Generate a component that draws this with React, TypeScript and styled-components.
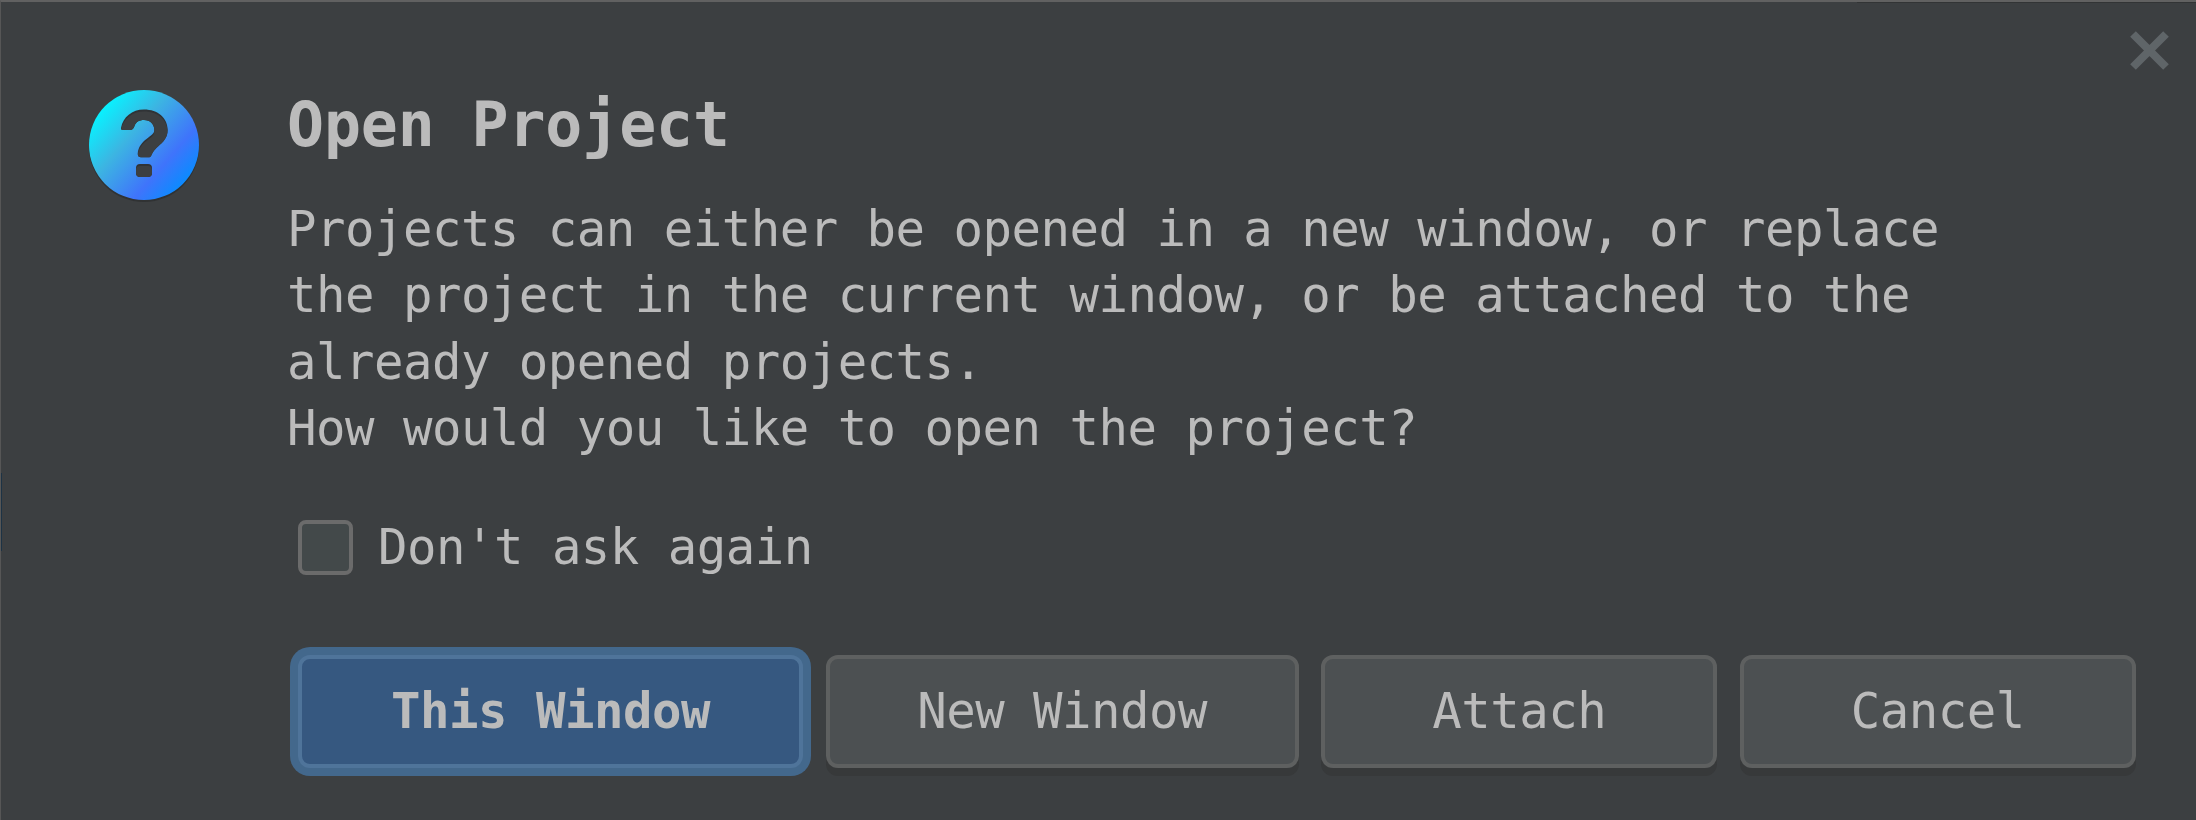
import React from "react";
import styled, { createGlobalStyle, css } from "styled-components";

const GlobalStyle = createGlobalStyle`
  * { box-sizing: border-box; }
  body { margin: 0; background: #3c3f41; }
`;

const Dialog = styled.main`
  position: relative;
  display: grid;
  grid-template-columns: 198px 1fr;
  column-gap: 88px;
  width: 2196px;
  height: 820px;
  overflow: hidden;
  background: #3c3f41;
  border-top: 2px solid #616161;
  border-left: 1px solid #565656;
  color: #bbbbbb;
  font-family: "DejaVu Sans Mono", monospace;
  font-size: 49px;
  letter-spacing: -0.52px;
`;

const TopEdge = styled.div`
  position: absolute;
  top: 0;
  right: 0;
  width: 339px;
  height: 1px;
  background: #323435;
`;

const FocusStripe = styled.div`
  position: absolute;
  left: 0;
  top: 471px;
  width: 1px;
  height: 78px;
  background: #1d3345;
`;

const IconColumn = styled.div`
  display: flex;
  justify-content: flex-end;
  padding-top: 88px;
`;

const Content = styled.div`
  display: flex;
  flex-direction: column;
  align-items: flex-start;
`;

const Title = styled.h1`
  margin: 85px 0 0;
  font-size: 61.5px;
  line-height: 76px;
  font-weight: 700;
  letter-spacing: -0.12px;
  white-space: pre;
`;

const Message = styled.p`
  margin: 34px 0 0;
  line-height: 66.4px;
  white-space: pre;
`;

const CheckRow = styled.label`
  display: flex;
  align-items: center;
  gap: 25px;
  height: 56px;
  margin: 56.4px 0 0 11px;
  white-space: pre;
`;

const Box = styled.span`
  width: 55px;
  height: 55px;
  border: 4px solid #6b6b6b;
  border-radius: 8px;
  background: #43494a;
`;

const Actions = styled.div`
  display: flex;
  gap: 22.6px;
  margin: 80px 0 0 11px;
`;

const Button = styled.button<{ $width: number; $primary?: boolean }>`
  width: ${(p) => p.$width}px;
  height: 113px;
  padding: 0;
  border: 4px solid #5e6060;
  border-radius: 12px;
  background: #4c5052;
  box-shadow: 0 8px 0 #37393a;
  color: #bbbbbb;
  font: inherit;
  letter-spacing: inherit;
  white-space: pre;
  ${(p) =>
    p.$primary &&
    css`
      border-color: #4f749a;
      background: #365880;
      box-shadow: 0 0 0 8px #43688c;
      font-weight: 700;
    `}
`;

const CloseButton = styled.button`
  position: absolute;
  top: 28px;
  right: 26px;
  display: flex;
  padding: 0;
  border: 0;
  background: none;
`;

const MARK =
  "M32 38C34 27 43 19.5 55 19.5C69 19.5 78.7 28 78.7 40C78.7 48 74 52 69 56.5C65 60 64 62 62.5 65C62 66.5 61 67.3 59.5 67.3H52C50 67.3 48.7 66 48.7 64C49 57 53 52.5 57.5 49C62 45.5 65.3 43.5 65.3 40C65.3 34 61 30 55 30C50 30 47 32 45.5 36C44.5 38.5 43.5 40 41 40H34.5C32.5 40 31.8 39.5 32 38Z M51 74H59Q63 74 63 78V83Q63 87 59 87H51Q47 87 47 83V78Q47 74 51 74Z";

const QuestionIcon = () => (
  <svg width="110" height="113" viewBox="0 0 110 113">
    <defs>
      <linearGradient id="disc" x1="0.12" y1="0.17" x2="0.88" y2="0.83">
        <stop offset="0" stopColor="#08f2ff" />
        <stop offset="0.35" stopColor="#3cb5e2" />
        <stop offset="0.75" stopColor="#3f74fb" />
        <stop offset="1" stopColor="#0b8bff" />
      </linearGradient>
      <clipPath id="mark">
        <path d={MARK} />
      </clipPath>
    </defs>
    <circle cx="55" cy="57" r="55" fill="#303233" />
    <circle cx="55" cy="55" r="55" fill="url(#disc)" />
    <path d={MARK} fill="#303336" />
    <g clipPath="url(#mark)">
      <path d={MARK} fill="#3c3f41" transform="translate(0 2)" />
    </g>
  </svg>
);

const CloseIcon = () => (
  <svg width="41" height="41" viewBox="0 0 41 41">
    <path d="M4 4L37 37M37 4L4 37" stroke="#5f6568" strokeWidth="8" />
  </svg>
);

const ACTIONS = [
  { label: "This Window", width: 505, primary: true },
  { label: "New Window", width: 473 },
  { label: "Attach", width: 396 },
  { label: "Cancel", width: 396 },
];

const MESSAGE = `Projects can either be opened in a new window, or replace
the project in the current window, or be attached to the
already opened projects.
How would you like to open the project?`;

export default function App() {
  return (
    <>
      <GlobalStyle />
      <Dialog>
        <TopEdge />
        <FocusStripe />
        <IconColumn>
          <QuestionIcon />
        </IconColumn>
        <Content>
          <Title>Open Project</Title>
          <Message>{MESSAGE}</Message>
          <CheckRow>
            <Box />
            Don't ask again
          </CheckRow>
          <Actions>
            {ACTIONS.map((a) => (
              <Button key={a.label} $width={a.width} $primary={a.primary}>
                {a.label}
              </Button>
            ))}
          </Actions>
        </Content>
        <CloseButton aria-label="Close">
          <CloseIcon />
        </CloseButton>
      </Dialog>
    </>
  );
}
